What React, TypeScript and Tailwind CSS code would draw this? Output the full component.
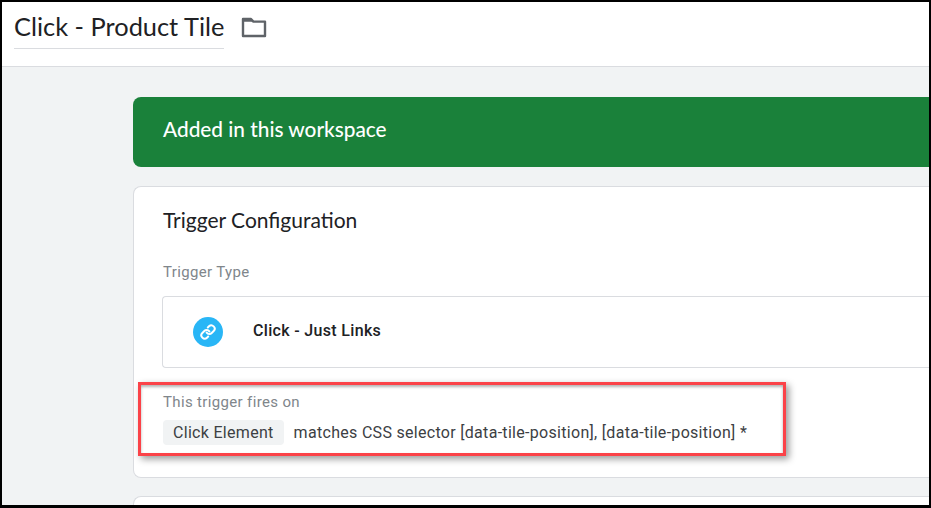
import React from 'react';
import { Link } from 'lucide-react';

const App: React.FC = () => {
  return (
    <div className="h-[508px] w-[931px] overflow-hidden border-t-2 border-l-2 border-r-[2px] border-b-[3px] border-black bg-[#f1f3f4] font-['Roboto',sans-serif]">
      {/* Header */}
      <div className="flex h-[65px] items-start border-b border-[#dadce0] bg-white pl-3">
        <div className="mt-[8px] h-[39px] border-b border-[#dadce0] font-['Lato',sans-serif] text-[25.4px] leading-[33px] text-[#202124]">
          Click - Product Tile
        </div>
        <svg className="ml-[17px] mt-[14px] h-[22px] w-[26px]" viewBox="0 0 26 22" fill="none">
          <path d="M2 3h8l2.4 2.6H24v14.4H2z" stroke="#5f6368" strokeWidth="2.4" strokeLinejoin="round" />
          <path d="M2 3h8l2.4 2.8H2z" fill="#5f6368" />
        </svg>
      </div>

      {/* Content column runs off the right edge */}
      <div className="relative pl-[131px] pt-[30px]">
        <div className="flex h-[70px] items-center rounded-l-lg bg-[#1a813a] pb-[6px] pl-[30px] font-['Lato',sans-serif] text-[20.8px] font-medium text-white">
          Added in this workspace
        </div>

        <div className="mt-[19px] h-[292px] rounded-l-lg border border-r-0 border-[#dadce0] bg-white pl-[29px] pt-[20px]">
          <div className="font-['Lato',sans-serif] text-[21px] leading-[26px] text-[#202124]">Trigger Configuration</div>
          <div className="mt-[29px] text-[15px] leading-5 tracking-[0.35px] text-[#80868b]">Trigger Type</div>
          <div className="-ml-px mt-[14px] flex h-[72px] items-center rounded-l border border-r-0 border-[#dadce0] pl-[30px]">
            <div className="flex h-[30px] w-[30px] items-center justify-center rounded-full bg-[#29b6f6]">
              <Link className="h-4 w-4 text-white" strokeWidth={3} />
            </div>
            <div className="mb-[2px] ml-[30px] text-[16px] font-medium tracking-[0.33px] text-[#202124]">Click - Just Links</div>
          </div>
          <div className="mt-[24px] text-[15px] leading-5 tracking-[0.35px] text-[#80868b]">This trigger fires on</div>
          <div className="mt-[8px] flex items-center text-[16px] tracking-[0.3px] text-[#3c4043]">
            <span className="flex h-[25px] items-center rounded-sm bg-[#f1f3f4] px-[10px]">Click Element</span>
            <span className="ml-[10px]">matches CSS selector [data-tile-position], [data-tile-position] *</span>
          </div>
        </div>

        <div className="mt-[18px] h-10 rounded-l-lg border border-r-0 border-[#dadce0] bg-white" />

        {/* Annotation box drawn over the screenshot */}
        <div className="absolute left-[136px] top-[315px] h-[74px] w-[648px] border-[3px] border-[#fb4248] shadow-[3px_3px_7px_rgba(0,0,0,0.4),inset_0_2px_3px_rgba(0,0,0,0.3)]" />
      </div>
    </div>
  );
};

export default App;
